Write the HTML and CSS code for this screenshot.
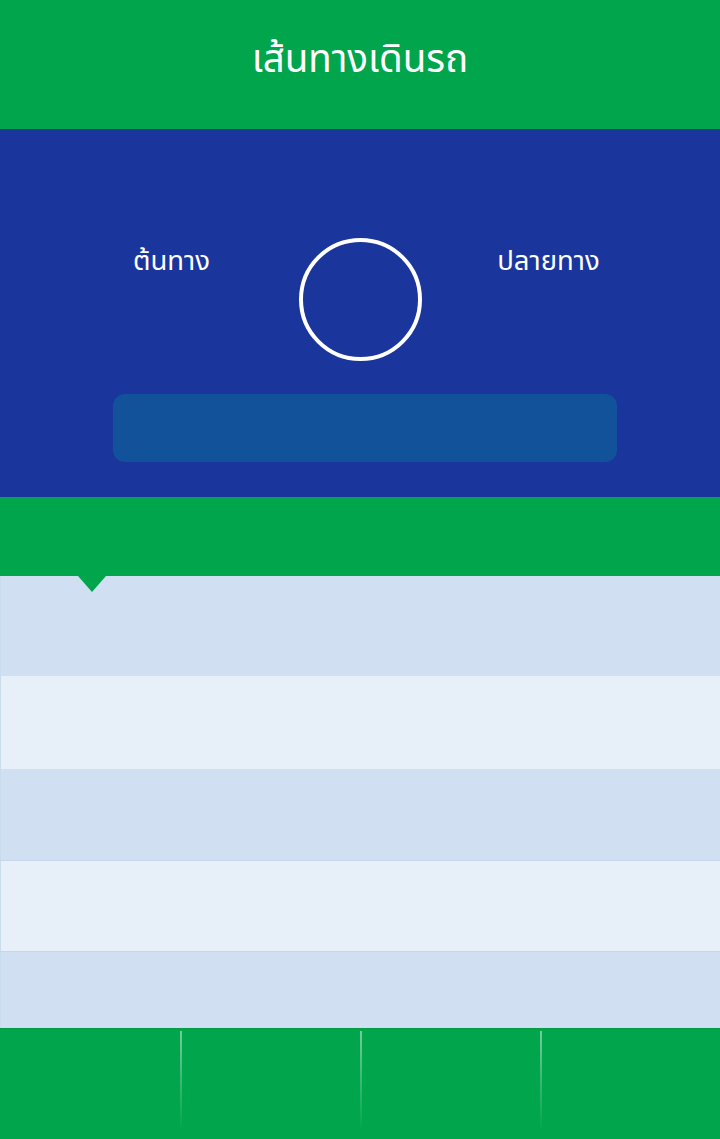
FILE: index.html
```html
<!DOCTYPE html>
<html lang="th">
<head>
<meta charset="utf-8">
<title>เส้นทางเดินรถ</title>
<link rel="stylesheet" href="styles.css">
</head>
<body>
<div class="app">
  <header class="topbar">
    <h1 class="title">เส้นทางเดินรถ</h1>
  </header>
  <section class="route">
    <div class="route-row">
      <div class="route-label">ต้นทาง</div>
      <div class="swap-circle"></div>
      <div class="route-label">ปลายทาง</div>
    </div>
    <button class="search-btn" type="button"></button>
  </section>
  <section class="tabband"></section>
  <ul class="list">
    <li class="row row-a row-first"><span class="pointer"></span></li>
    <li class="row row-b row-second"></li>
    <li class="row row-a row-third"></li>
    <li class="row row-b row-fourth"></li>
    <li class="row row-a row-last"></li>
  </ul>
  <nav class="bottombar">
    <div class="tab"></div>
    <div class="tab"></div>
    <div class="tab"></div>
    <div class="tab"></div>
  </nav>
</div>
</body>
</html>
```

FILE: styles.css
```css
* { box-sizing: border-box; }
html, body { margin: 0; padding: 0; }
body {
  width: 720px;
  height: 1139px;
  overflow: hidden;
  font-family: "Noto Sans Thai", "Noto Sans Thai UI", "Noto Sans", "Liberation Sans", sans-serif;
  background: #E7EFF9;
}
.app {
  display: flex;
  flex-direction: column;
  height: 1139px;
}
.topbar {
  height: 129px;
  background: #00A54C;
  display: flex;
  align-items: center;
  justify-content: center;
}
.title {
  margin: 0;
  color: #fff;
  font-weight: 400;
  font-size: 38.5px;
  line-height: 1;
  padding-bottom: 8px;
}
.route {
  height: 368px;
  background: #1A359C;
  padding-top: 109px;
  display: flex;
  flex-direction: column;
  align-items: center;
}
.route-row {
  display: grid;
  grid-template-columns: 254px 123px 254px;
  width: 631px;
}
.route-label {
  color: #fff;
  font-size: 27.5px;
  line-height: 30px;
  text-align: center;
  padding-top: 9px;
}
.swap-circle {
  width: 123px;
  height: 123px;
  border: 4px solid #fff;
  border-radius: 50%;
}
.search-btn {
  margin-top: 33px;
  width: 504px;
  height: 68px;
  border: 0;
  border-radius: 12px;
  background: #11529A;
  margin-left: 10px;
}
.tabband {
  height: 79px;
  background: #00A54C;
}
.list {
  list-style: none;
  margin: 0;
  padding: 0;
  flex: 1;
  display: flex;
  flex-direction: column;
  overflow: hidden;
}
.row {
  border-left: 1px solid #C8DCEB;
  flex-shrink: 0;
  position: relative;
}
.row-a { background: #D0E0F2; }
.row-b { background: #E7EFF9; }
.row-first { height: 100px; }
.row-second { height: 93px; }
.row-third { height: 92px; border-bottom: 1px solid #C3D6EC; }
.row-fourth { height: 91px; border-bottom: 1px solid #C3D6EC; }
.row-last { flex: 1; }
.pointer {
  position: absolute;
  left: 77px;
  top: 0;
  width: 0;
  height: 0;
  border-left: 14px solid transparent;
  border-right: 14px solid transparent;
  border-top: 16px solid #00A54C;
}
.bottombar {
  height: 111px;
  flex-shrink: 0;
  background: #00A54C;
  border-top: 1px solid #009A47;
  display: grid;
  grid-template-columns: repeat(4, 1fr);
  padding-top: 2px;
}
.tab {
  height: 100px;
}
.tab + .tab {
  border-left: 2px solid transparent;
  border-image: linear-gradient(to bottom, rgba(255,255,255,0.45), rgba(255,255,255,0)) 1;
}
```
